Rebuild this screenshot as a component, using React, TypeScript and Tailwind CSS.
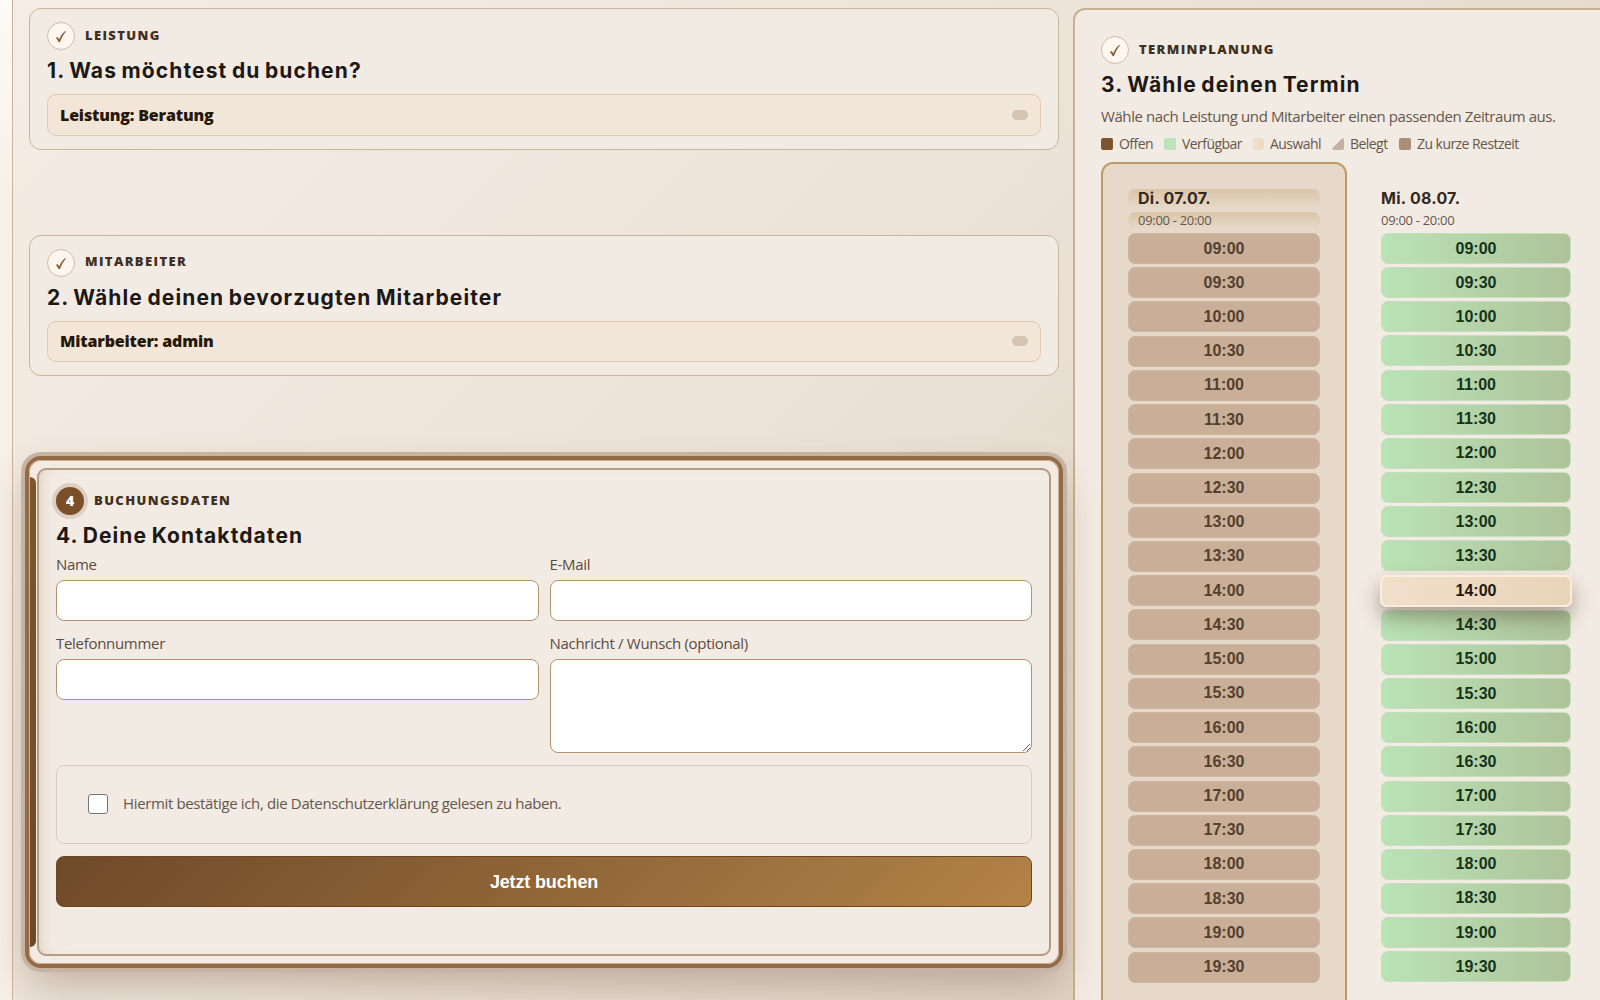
const times = [
  "09:00", "09:30", "10:00", "10:30", "11:00", "11:30", "12:00", "12:30", "13:00", "13:30", "14:00",
  "14:30", "15:00", "15:30", "16:00", "16:30", "17:00", "17:30", "18:00", "18:30", "19:00", "19:30",
];

function StepHead({ label }: { label: string }) {
  return (
    <div className="flex h-7 items-center gap-[10px]">
      <span className="flex size-7 items-center justify-center rounded-full border border-[#d2bba6] bg-[#fdf7ef]">
        <svg width="12" height="13" viewBox="0 0 12 13" className="mt-px mr-px">
          <path d="M0.9 7.9 L2.6 7 L4.2 9.3 C5.6 6 7.4 3.2 10.2 0.9 L11 1.6 C8.4 4.6 6.6 7.8 5.2 11.8 L3.6 12.3 C3 10.6 2.1 9.2 0.9 7.9 Z" fill="#8a6038" />
        </svg>
      </span>
      <StepLabel>{label}</StepLabel>
    </div>
  );
}

function StepLabel({ children }: { children: string }) {
  return <span className="-mt-0.5 text-[13px] leading-none font-extrabold tracking-[1.37px] whitespace-nowrap text-[#41301f]">{children}</span>;
}

function Title({ children }: { children: string }) {
  return (
    <h2 className="pt-px font-['Inter'] text-[21px] leading-[27px] font-bold tracking-[1.1px] whitespace-nowrap text-[#1d1814] [word-spacing:-1.5px]">
      {children}
    </h2>
  );
}

function SummaryCard({ label, title, value }: { label: string; title: string; value: string }) {
  return (
    <section className="rounded-xl border border-[#ccb49c] bg-[#f2ebe3] px-[17px] pt-[13px] pb-[13px]">
      <StepHead label={label} />
      <div className="mt-[6px]">
        <Title>{title}</Title>
      </div>
      <div className="mt-[10px] flex h-[41.5px] items-center justify-between rounded-[9px] border border-[#e0cab0] bg-[#f2e6d8] px-3">
        <span className="text-base font-extrabold tracking-[-0.17px] text-[#261708]">{value}</span>
        <span className="h-[10px] w-4 rounded-full bg-[#d5c3b3]" />
      </div>
    </section>
  );
}

function Slot({ time, variant }: { time: string; variant: "busy" | "free" | "selected" }) {
  if (variant === "selected") {
    return (
      <div className="relative -mx-px flex h-8 items-center justify-center rounded-[7px] border-2 border-[#fbeddc] bg-linear-to-r from-[#f1dfcb] to-[#e9d4b8] font-['Liberation_Sans'] text-base font-bold text-[#23170d] shadow-[0_10px_20px_rgba(60,40,25,0.4)]">
        {time}
      </div>
    );
  }
  return (
    <div
      className={
        variant === "busy"
          ? "flex h-[31px] items-center justify-center rounded-[7px] border border-[#cdb6a1] bg-[#c9af98] font-['Liberation_Sans'] text-base font-bold text-[#54402f]"
          : "flex h-[31px] items-center justify-center rounded-[7px] border border-[#c6dfba] bg-linear-to-r from-[#bae3b6] to-[#aec39a] font-['Liberation_Sans'] text-base font-bold text-[#14331a]"
      }
    >
      {time}
    </div>
  );
}

function Legend() {
  return (
    <div className="mt-2 flex h-5 items-center text-sm tracking-[-0.55px] whitespace-nowrap text-[#66574b]">
      <span className="mr-[6px] size-3 rounded-[2px] bg-[#80542d]" />
      <span className="w-[45px]">Offen</span>
      <span className="mr-[6px] size-3 rounded-[2px] bg-[#bbe4b9]" />
      <span className="w-[70px]">Verfügbar</span>
      <span className="mr-[6px] size-3 rounded-[2px] bg-linear-to-r from-[#f2e1cc] to-[#ecdac3]" />
      <span className="w-[62px]">Auswahl</span>
      <span className="mr-[6px] size-3 rounded-[2px] bg-[linear-gradient(135deg,transparent_42%,#c4b1a3_46%)]" />
      <span className="w-[49px]">Belegt</span>
      <span className="mr-[6px] size-3 rounded-[2px] bg-[#ab8d79]" />
      <span>Zu kurze Restzeit</span>
    </div>
  );
}

function Field({ label, area }: { label: string; area?: boolean }) {
  const box = "block w-full rounded-lg border border-[#b4926f] bg-white";
  return (
    <label className="block text-[15px] leading-5 tracking-[-0.3px] text-[#5b4c40]">
      {label}
      {area ? <textarea className={`${box} mt-[6px] h-[94px] resize`} /> : <input className={`${box} mt-[6px] h-[41px]`} />}
    </label>
  );
}

function ContactCard() {
  return (
    <section className="relative mt-[84px] h-[504px] rounded-xl bg-[#f2ebe3] px-[27px] pt-[27px] shadow-[inset_0_0_0_1px_#cbb08f,0_0_0_4px_#936b46,0_0_0_8px_#c7b3a2,0_18px_40px_rgba(90,60,30,0.32)]">
      <div className="absolute top-[17px] bottom-[17px] left-px w-[6px] rounded-r-md bg-linear-to-b from-[#80552d] to-[#6d4828]" />
      <div className="pointer-events-none absolute inset-2 rounded-[9px] border-2 border-[#b49b82] shadow-[inset_10px_0_14px_-10px_rgba(128,90,50,0.25)]" />
      <div className="flex h-7 items-center gap-[10px]">
        <span className="flex size-7 items-center justify-center rounded-full bg-[#7a4f2a] text-sm font-extrabold text-white shadow-[0_0_0_4px_#dccfc3]">4</span>
        <StepLabel>BUCHUNGSDATEN</StepLabel>
      </div>
      <div className="mt-[6px]">
        <Title>4. Deine Kontaktdaten</Title>
      </div>
      <div className="mt-[5px] grid grid-cols-2 gap-x-[11px]">
        <Field label="Name" />
        <Field label="E-Mail" />
        <div className="mt-3">
          <Field label="Telefonnummer" />
        </div>
        <div className="mt-3">
          <Field label="Nachricht / Wunsch (optional)" area />
        </div>
      </div>
      <div className="mt-3 flex h-[79px] items-center rounded-lg border border-[#d9ccbf] pl-[31px]">
        <span className="-mt-px size-5 rounded-[3px] border border-[#767676] bg-white" />
        <span className="-mt-[3px] ml-[15px] text-[15px] tracking-[-0.36px] whitespace-nowrap text-[#66574b]">
          Hiermit bestätige ich, die Datenschutzerklärung gelesen zu haben.
        </span>
      </div>
      <button className="mt-3 block h-[51px] w-full rounded-lg border border-[#6c4725] bg-linear-135 from-[#6f4a29] to-[#b38347] font-['Liberation_Sans'] text-lg font-bold tracking-[-0.15px] text-white">
        Jetzt buchen
      </button>
    </section>
  );
}

function DayColumn({ day, active }: { day: string; active?: boolean }) {
  return (
    <div
      className={
        active
          ? "h-[860px] w-[246px] rounded-xl border-2 border-[#c19b66] bg-[#e6d9c9] px-[25px] pt-[25px]"
          : "h-[860px] w-[246px] px-[28px] pt-[27px]"
      }
    >
      <div className={active ? "h-[19px] rounded-lg bg-linear-to-b from-[#dac5a7] to-[#e6d9c9] pl-[10px]" : "h-[19px]"}>
        <div className="font-['Inter'] text-base leading-[18px] font-bold tracking-[0.25px] text-[#342820]">{day}</div>
      </div>
      <div className={active ? "mt-1 h-[17px] rounded-lg bg-linear-to-b from-[#dac5a7] to-[#e6d9c9] pl-[10px]" : "mt-1 h-[17px]"}>
        <div className="text-[13px] leading-[17px] tracking-[-0.3px] text-[#66574b]">09:00 - 20:00</div>
      </div>
      <div className={active ? "mt-1 flex flex-col gap-[3.22px]" : "mt-1 flex flex-col gap-[3.17px]"}>
        {times.map((t) => (
          <Slot key={t} time={t} variant={active ? "busy" : t === "14:00" ? "selected" : "free"} />
        ))}
      </div>
    </div>
  );
}

export default function App() {
  return (
    <div className="h-[1000px] w-[1600px] overflow-hidden bg-linear-to-b from-[#fdfbf7] to-[#f7f0e8] to-20% pl-3 font-['Open_Sans']">
      <div className="flex h-full w-[1700px] border-l border-[#ccb49c] bg-linear-135 from-[#f5ede5] via-[#ebe2d7] via-45% to-[#d8c7b6] pt-2 pl-4">
        <div className="w-[1030px] shrink-0">
          <SummaryCard label="LEISTUNG" title="1. Was möchtest du buchen?" value="Leistung: Beratung" />
          <div className="h-[85px]" />
          <SummaryCard label="MITARBEITER" title="2. Wähle deinen bevorzugten Mitarbeiter" value="Mitarbeiter: admin" />
          <ContactCard />
        </div>
        <section className="ml-[14px] h-[1100px] w-[640px] shrink-0 rounded-xl border-2 border-[#cab08c] bg-[#f2ebe3] px-[26px] pt-[26px]">
          <StepHead label="TERMINPLANUNG" />
          <div className="mt-[6px]">
            <Title>3. Wähle deinen Termin</Title>
          </div>
          <p className="mt-2 text-[15px] leading-5 tracking-[-0.41px] whitespace-nowrap text-[#66574b]">
            Wähle nach Leistung und Mitarbeiter einen passenden Zeitraum aus.
          </p>
          <Legend />
          <div className="mt-2 flex gap-[6px]">
            <DayColumn day="Di. 07.07." active />
            <DayColumn day="Mi. 08.07." />
          </div>
        </section>
      </div>
    </div>
  );
}
